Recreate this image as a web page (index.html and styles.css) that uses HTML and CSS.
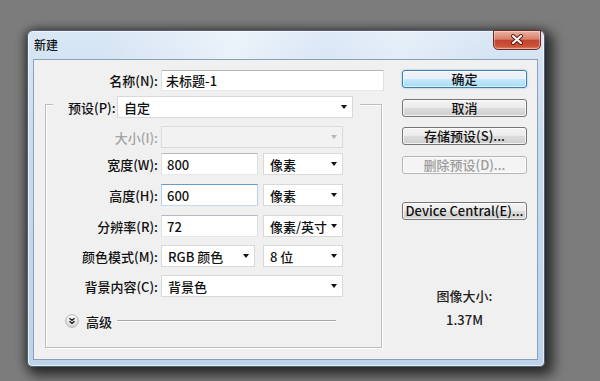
FILE: index.html
```html
<!DOCTYPE html>
<html lang="zh-CN">
<head>
    <meta charset="UTF-8">
    <title>新建</title>
    <link rel="stylesheet" href="styles.css">
</head>
<body>
    <div class="desktop">
        <div class="window">
            <div class="titlebar">
                <span class="title">新建</span>
                <div class="close-btn">
                    <svg width="46" height="18" viewBox="0 0 46 18">
                        <path d="M19 5 L27 12 M27 5 L19 12" stroke="#5a1a10" stroke-width="4" stroke-linecap="round"/>
                        <path d="M19 5 L27 12 M27 5 L19 12" stroke="#ffffff" stroke-width="2" stroke-linecap="round"/>
                    </svg>
                </div>
            </div>

            <div class="client">
                <div class="main">
                    <div class="name-row">
                        <label class="name-label">名称(N):</label>
                        <input class="text-field name-field" type="text" value="未标题-1">
                    </div>

                    <div class="group">
                        <div class="preset-row">
                            <label class="preset-label">预设(P):</label>
                            <div class="select preset-select"><span>自定</span><i class="arrow"></i></div>
                        </div>

                        <div class="field-row row-size">
                            <label class="row-label disabled">大小(I):</label>
                            <div class="select select-wide select-disabled"><span></span><i class="arrow"></i></div>
                        </div>

                        <div class="field-row row-width">
                            <label class="row-label">宽度(W):</label>
                            <input class="text-field num-field" type="text" value="800">
                            <div class="select unit-select"><span>像素</span><i class="arrow"></i></div>
                        </div>

                        <div class="field-row">
                            <label class="row-label">高度(H):</label>
                            <input class="text-field num-field focused" type="text" value="600">
                            <div class="select unit-select"><span>像素</span><i class="arrow"></i></div>
                        </div>

                        <div class="field-row">
                            <label class="row-label">分辨率(R):</label>
                            <input class="text-field num-field" type="text" value="72">
                            <div class="select unit-select"><span>像素/英寸</span><i class="arrow"></i></div>
                        </div>

                        <div class="field-row row-tight">
                            <label class="row-label">颜色模式(M):</label>
                            <div class="select mode-select"><span>RGB 颜色</span><i class="arrow"></i></div>
                            <div class="select unit-select"><span>8 位</span><i class="arrow"></i></div>
                        </div>

                        <div class="field-row row-tight">
                            <label class="row-label">背景内容(C):</label>
                            <div class="select select-wide"><span>背景色</span><i class="arrow"></i></div>
                        </div>

                        <div class="advanced-row">
                            <svg class="chevron" width="14" height="14" viewBox="0 0 14 14">
                                <defs>
                                    <linearGradient id="chev" x1="0" y1="0" x2="0" y2="1">
                                        <stop offset="0" stop-color="#ffffff"/>
                                        <stop offset="1" stop-color="#d4d4d4"/>
                                    </linearGradient>
                                </defs>
                                <circle cx="7" cy="7" r="6.3" fill="url(#chev)" stroke="#b0b0b0"/>
                                <path d="M4.5 4.2 L7 6.4 L9.5 4.2 M4.5 7.2 L7 9.4 L9.5 7.2" fill="none" stroke="#222222" stroke-width="1.4"/>
                            </svg>
                            <span class="advanced-text">高级</span>
                            <div class="etched-line"></div>
                        </div>
                    </div>
                </div>

                <div class="side">
                    <div class="btn btn-default">确定</div>
                    <div class="btn btn-cancel">取消</div>
                    <div class="btn btn-save">存储预设(S)...</div>
                    <div class="btn btn-delete disabled-btn">删除预设(D)...</div>
                    <div class="btn btn-device">Device Central(E)...</div>

                    <div class="image-size">
                        <div class="size-label">图像大小:</div>
                        <div class="size-value">1.37M</div>
                    </div>
                </div>
            </div>
        </div>
    </div>
</body>
</html>
```

FILE: styles.css
```css
* {
    box-sizing: border-box;
}
body {
    margin: 0;
    width: 600px;
    height: 381px;
    overflow: hidden;
    background-color: #7c7c7c;
    font-family: "Noto Sans CJK SC", sans-serif;
    font-size: 13px;
    font-weight: 500;
    color: #111111;
}
.desktop {
    padding: 30px 0 0 27px;
}

/* window frame */
.window {
    width: 518px;
    height: 337px;
    display: flex;
    flex-direction: column;
    border: 1px solid #4f6173;
    border-radius: 6px 6px 5px 5px;
    background: linear-gradient(to bottom, #d9e7f5, #c9dbee 30%, #bed2e9);
    box-shadow: inset 0 0 0 1px rgba(255, 255, 255, 0.6), 5px 5px 12px 4px rgba(0, 0, 0, 0.6), -2px 0 8px rgba(0, 0, 0, 0.35);
}
.titlebar {
    height: 28px;
    display: flex;
    justify-content: space-between;
    align-items: flex-start;
    padding: 0 3px 0 6px;
    border-radius: 5px 5px 0 0;
    background: linear-gradient(100deg, rgba(255, 255, 255, 0) 15%, rgba(255, 255, 255, 0.5) 40%, rgba(255, 255, 255, 0.1) 58%, rgba(255, 255, 255, 0.35) 72%, rgba(255, 255, 255, 0) 90%);
}
.title {
    line-height: 28px;
    font-size: 12px;
    color: #151515;
}
.close-btn {
    width: 48px;
    height: 20px;
    margin-top: -1px;
    border: 1px solid #6e2d22;
    border-radius: 0 0 5px 5px;
    background: linear-gradient(to bottom, #eab3a6, #d9806b 45%, #c4442d 52%, #cc5238 85%, #de8a6c);
    box-shadow: inset 0 0 0 1px rgba(255, 255, 255, 0.35);
}
.close-btn svg {
    display: block;
}

/* client area */
.client {
    flex: 1;
    display: flex;
    margin: 0 6px 6px 5px;
    padding: 10px 0 0 11px;
    background-color: #f0f0f0;
    border: 1px solid #8aa0b8;
}
.main {
    width: 339px;
}
.side {
    width: 125px;
    margin-left: 18px;
    display: flex;
    flex-direction: column;
}

/* fields */
.name-row {
    display: flex;
    align-items: center;
    height: 21px;
}
.name-label {
    width: 113px;
    margin-right: 3px;
    text-align: right;
}
.text-field {
    height: 100%;
    margin: 0;
    padding: 0 5px;
    font-family: inherit;
    font-size: 13px;
    font-weight: 500;
    color: #111;
    background-color: #ffffff;
    border: 1px solid;
    border-color: #b4b7bd #dde1e7 #e5e9ee #dde1e7;
    outline: none;
}
.name-field {
    width: 223px;
    padding-left: 4px;
}
.num-field {
    width: 97px;
    margin-right: 5px;
}
.focused {
    border-color: #6a9cc8 #b3d0ea #c2daef #b3d0ea;
}

.group {
    width: 337px;
    height: 244px;
    margin-top: 13px;
    border: 1px solid #bdbdbd;
    box-shadow: inset 1px 1px 0 #ffffff, 1px 1px 0 #ffffff;
}
.preset-row {
    display: flex;
    align-items: center;
    width: 307px;
    height: 22px;
    margin: -9px 0 0 7px;
    padding: 0 7px 0 15px;
    background-color: #f0f0f0;
}
.preset-label {
    width: 49px;
}
.preset-select {
    width: 236px;
}

.field-row {
    display: flex;
    align-items: center;
    height: 22px;
    margin-top: 9px;
}
.row-size {
    margin-top: 8px;
}
.row-width {
    margin-top: 5px;
}
.row-tight {
    margin-top: 8px;
}
.row-label {
    width: 112px;
    margin-right: 3px;
    text-align: right;
}
.disabled {
    color: #a3a3a3;
}

.select {
    height: 22px;
    display: flex;
    align-items: center;
    justify-content: space-between;
    padding: 0 5px 0 6px;
    background-color: #ffffff;
    border: 1px solid #d9d9d9;
    white-space: nowrap;
}
.select-wide {
    width: 182px;
}
.unit-select {
    width: 80px;
}
.mode-select {
    width: 94px;
    margin-right: 8px;
}
.select-disabled {
    background-color: #f2f2f2;
    border-color: #dadada;
}
.arrow {
    width: 0;
    height: 0;
    flex-shrink: 0;
    border-left: 3.5px solid transparent;
    border-right: 3.5px solid transparent;
    border-top: 4px solid #111111;
}
.select-disabled .arrow {
    border-top-color: #b8b8b8;
}

.advanced-row {
    display: flex;
    align-items: center;
    height: 16px;
    margin-top: 16px;
    padding: 0 45px 0 19px;
}
.chevron {
    display: block;
}
.advanced-text {
    margin-left: 7px;
}
.etched-line {
    flex: 1;
    height: 2px;
    margin-left: 5px;
    border-top: 1px solid #a8a8a8;
    border-bottom: 1px solid #ffffff;
}

/* buttons */
.btn {
    height: 18px;
    line-height: 16px;
    text-align: center;
    border: 1px solid #767676;
    border-radius: 3px;
    background: linear-gradient(to bottom, #f4f4f4, #ebebeb 48%, #dcdcdc 52%, #cfcfcf);
    box-shadow: inset 0 0 0 1px rgba(255, 255, 255, 0.7);
    white-space: nowrap;
}
.btn-default {
    border-color: #3c7fb1;
    background: linear-gradient(to bottom, #f5f1f5, #e4f1fa 48%, #c4e8f9 52%, #a9dcf4);
    box-shadow: inset 0 0 0 1px rgba(255, 255, 255, 0.6), 0 0 2px rgba(70, 160, 210, 0.7);
}
.btn-cancel {
    margin-top: 11px;
}
.btn-save {
    margin-top: 10px;
}
.btn-delete {
    margin-top: 11px;
}
.btn-device {
    margin-top: 28px;
}
.disabled-btn {
    color: #9c9c9c;
    border-color: #b2b6b9;
    background: #f4f4f4;
}

.image-size {
    margin-top: 68px;
    text-align: center;
    line-height: 16px;
    color: #222222;
}
.size-value {
    margin-top: 8px;
}
```
